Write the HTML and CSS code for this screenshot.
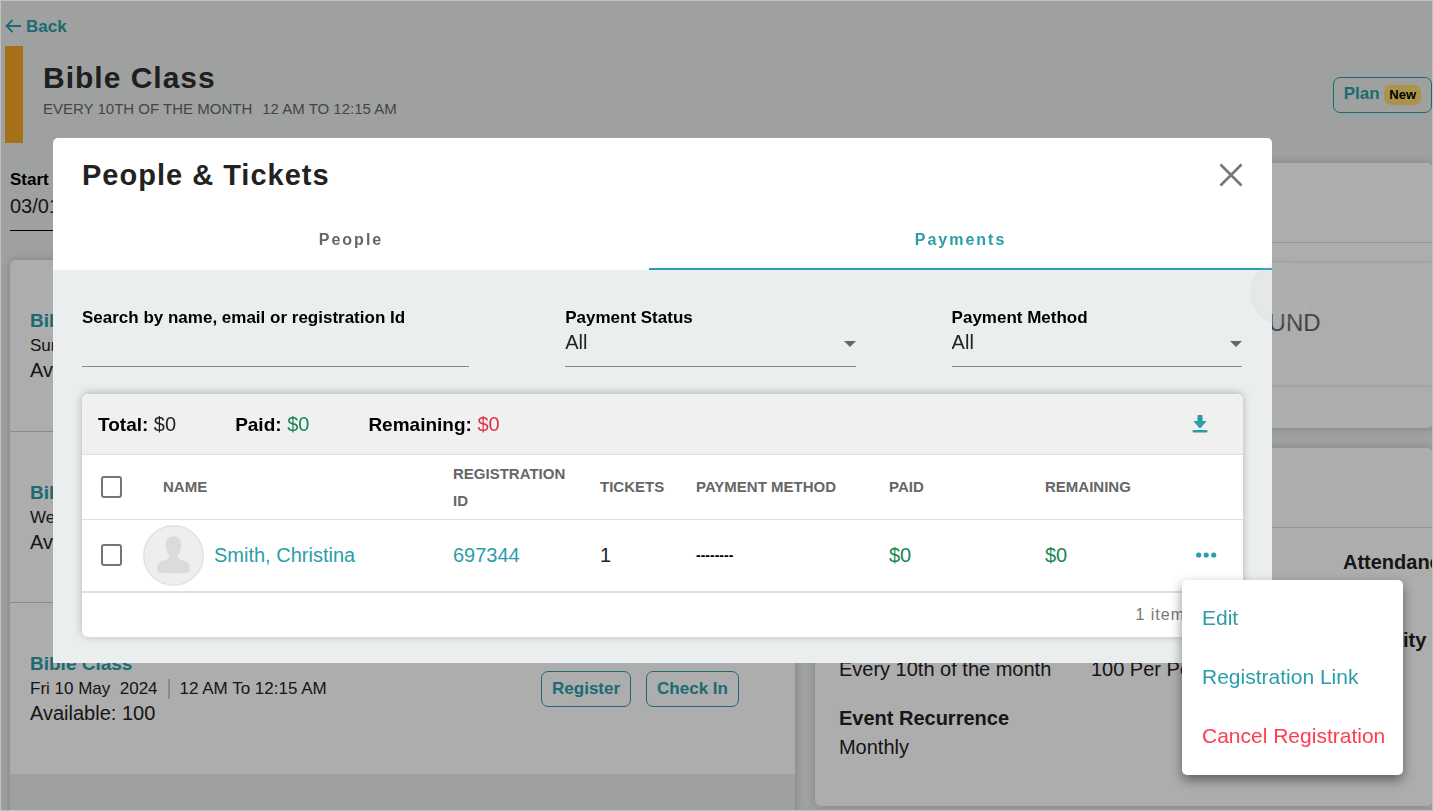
FILE: index.html
```html
<!DOCTYPE html>
<html lang="en">
<head>
    <meta charset="UTF-8">
    <meta name="viewport" content="width=device-width, initial-scale=1.0">
    <title>People &amp; Tickets</title>
    <link rel="stylesheet" href="styles.css">
</head>
<body>
    <div class="page">
        <header>
            <a href="#" class="back-link">
                <svg width="16" height="14" viewBox="0 0 16 14" fill="none" stroke="currentColor" stroke-width="1.8"><path d="M7.5 1L1.5 7l6 6M1.5 7H16"/></svg>
                Back
            </a>
            <div class="event-header">
                <div class="event-title">
                    <h1>Bible Class</h1>
                    <p><span>Every 10th of the month</span><span>12 AM to 12:15 AM</span></p>
                </div>
                <button class="outline-btn plan-btn">Plan <span class="badge">New</span></button>
            </div>
        </header>

        <div class="columns">
            <main>
                <div class="date-field">
                    <label for="start-date">Start Date</label>
                    <input type="text" id="start-date" value="03/01/2024">
                </div>
                <div class="occurrences">
                    <div class="occurrence">
                        <div>
                            <h3>Bible Class</h3>
                            <p class="when"><span>Sun 10 Mar &nbsp;2024</span></p>
                            <p>Available: 100</p>
                        </div>
                    </div>
                    <div class="occurrence">
                        <div>
                            <h3>Bible Class</h3>
                            <p class="when"><span>Wed 10 Apr &nbsp;2024</span></p>
                            <p>Available: 100</p>
                        </div>
                    </div>
                    <div class="occurrence">
                        <div>
                            <h3>Bible Class</h3>
                            <p class="when"><span>Fri 10 May &nbsp;2024</span><span>12 AM To 12:15 AM</span></p>
                            <p>Available: 100</p>
                        </div>
                        <div class="occurrence-actions">
                            <button class="outline-btn">Register</button>
                            <button class="outline-btn">Check In</button>
                        </div>
                    </div>
                </div>
            </main>

            <aside>
                <section class="card">
                    <div class="card-head"></div>
                    <div class="empty">NO RECORDS FOUND</div>
                    <div class="card-foot"></div>
                </section>
                <section class="card">
                    <div class="card-head"></div>
                    <dl class="details">
                        <div></div>
                        <div></div>
                        <div><dt>Attendance</dt></div>
                        <div><dt>Schedule</dt><dd>Every 10th of the month</dd></div>
                        <div><dt>Limit</dt><dd>100 Per Person</dd></div>
                        <div><dt>Capacity</dt></div>
                        <div><dt>Event Recurrence</dt><dd>Monthly</dd></div>
                    </dl>
                </section>
            </aside>
        </div>
    </div>

    <div class="overlay">
        <div class="modal" role="dialog" aria-labelledby="modal-title">
            <div class="modal-header">
                <h2 id="modal-title">People &amp; Tickets</h2>
                <button class="icon-btn close-btn" aria-label="Close">
                    <svg width="24" height="24" viewBox="0 0 24 24" fill="none" stroke="currentColor" stroke-width="2.6"><path d="M1.5 1.5l21 21M22.5 1.5l-21 21"/></svg>
                </button>
            </div>
            <div class="tab-buttons">
                <button class="tab-button">People</button>
                <button class="tab-button active">Payments</button>
            </div>

            <div class="modal-body">
                <div class="filters">
                    <div class="field">
                        <label for="search">Search by name, email or registration Id</label>
                        <input type="text" id="search">
                    </div>
                    <div class="field select">
                        <label for="payment-status">Payment Status</label>
                        <select id="payment-status"><option>All</option></select>
                    </div>
                    <div class="field select">
                        <label for="payment-method">Payment Method</label>
                        <select id="payment-method"><option>All</option></select>
                    </div>
                </div>

                <div class="payments">
                    <div class="summary">
                        <p><strong>Total:</strong> $0</p>
                        <p><strong>Paid:</strong> <span class="green">$0</span></p>
                        <p><strong>Remaining:</strong> <span class="red">$0</span></p>
                        <button class="icon-btn download-btn" aria-label="Download">
                            <svg width="16" height="18" viewBox="0 0 16 18" fill="currentColor"><path stroke="currentColor" stroke-linejoin="round" d="M6 .5h4v6h3.800L8 13 2.200 6.500H6z"/><rect x="0.500" y="15" width="15" height="2.600" rx="1"/></svg>
                        </button>
                    </div>
                    <table>
                        <thead>
                            <tr>
                                <th class="col-check"><input type="checkbox" aria-label="Select all"></th>
                                <th class="col-name">Name</th>
                                <th class="col-id">Registration ID</th>
                                <th class="col-tickets">Tickets</th>
                                <th class="col-method">Payment Method</th>
                                <th class="col-paid">Paid</th>
                                <th class="col-remaining">Remaining</th>
                                <th class="col-actions"></th>
                            </tr>
                        </thead>
                        <tbody>
                            <tr>
                                <td class="col-check"><input type="checkbox" aria-label="Select Smith, Christina"></td>
                                <td>
                                    <a href="#" class="person">
                                        <svg class="avatar" width="61" height="61" viewBox="0 0 61 61">
                                            <circle cx="30.500" cy="30.500" r="29.700" fill="#eee" stroke="#e2e2e2" stroke-width="1.500"/>
                                            <path fill="#dbdbdb" d="M30.500 11.200c4.800 0 7.800 3.200 7.800 8.200 0 4.600-1.500 8.200-3.500 10.600-.6 3.400 1.200 4 4.200 5 4.500 1.400 7.600 3.200 7.600 6.500v3.500c0 1.400-.7 2-2 2.400-8.500 1.500-19.500 1.500-28.200 0-1.400-.4-2-1-2-2.400v-3.500c0-3.300 3.100-5.100 7.600-6.500 3-1 4.800-1.600 4.200-5-2-2.400-3.500-6-3.500-10.600 0-5 3-8.200 7.800-8.200z"/>
                                        </svg>
                                        Smith, Christina
                                    </a>
                                </td>
                                <td><a href="#">697344</a></td>
                                <td>1</td>
                                <td class="no-method">--------</td>
                                <td class="green">$0</td>
                                <td class="green">$0</td>
                                <td>
                                    <div class="actions">
                                        <button class="icon-btn" aria-label="More actions">
                                            <svg width="22" height="6" viewBox="0 0 22 6" fill="currentColor"><circle cx="2.700" cy="3" r="2.600"/><circle cx="10.200" cy="3" r="2.600"/><circle cx="17.700" cy="3" r="2.600"/></svg>
                                        </button>
                                        <div class="menu">
                                            <button>Edit</button>
                                            <button>Registration Link</button>
                                            <button class="danger">Cancel Registration</button>
                                        </div>
                                    </div>
                                </td>
                            </tr>
                        </tbody>
                    </table>
                    <div class="table-footer">1 item</div>
                </div>
            </div>
            <span class="ripple"></span>
        </div>
    </div>
</body>
</html>
```

FILE: styles.css
```css
* {
    box-sizing: border-box;
}

body {
    font-family: "Liberation Sans", Arial, sans-serif;
    font-size: 20px;
    line-height: 25px;
    color: #222;
    background-color: #eaeeed;
    margin: 0;
    overflow: hidden;
}

h1, h2, h3, p, dl, dd {
    margin: 0;
}

a {
    color: #2a9ea8;
    text-decoration: none;
}

button, input, select {
    font-family: inherit;
    font-size: inherit;
    color: inherit;
}

button {
    cursor: pointer;
}

.page {
    min-height: 100vh;
}

.back-link {
    display: flex;
    align-items: center;
    gap: 5px;
    height: 46px;
    padding: 6px 5px 0;
    font-size: 17px;
    font-weight: bold;
}

.event-header {
    display: flex;
    align-items: center;
    justify-content: space-between;
    height: 97px;
    margin-left: 5px;
    padding-right: 1px;
    border-left: 18px solid #f5a623;
}

.event-title {
    padding-left: 20px;
}

h1 {
    font-size: 30px;
    line-height: 36px;
    letter-spacing: 1px;
    color: #2f2f2f;
}

.event-title p {
    display: flex;
    gap: 10px;
    margin-bottom: 8px;
    font-size: 15px;
    color: #666;
    text-transform: uppercase;
}

.outline-btn {
    height: 36px;
    padding: 0 10px;
    background: none;
    border: 1px solid #2a9ea8;
    border-radius: 7px;
    color: #2a9ea8;
    font-size: 17px;
    font-weight: bold;
}

.badge {
    display: inline-block;
    padding: 0 5px;
    border-radius: 7px;
    background-color: #fddb6d;
    color: #000;
    font-size: 13px;
    line-height: 20px;
}

.columns {
    display: grid;
    grid-template-columns: minmax(0, 127fr) minmax(0, 100fr);
    gap: 20px;
    margin-top: 20px;
    padding-left: 10px;
}

.date-field label {
    display: block;
    padding-top: 4px;
    font-size: 17px;
    font-weight: bold;
    color: #000;
}

.date-field input {
    width: 240px;
    height: 39px;
    padding: 0 0 10px;
    background: none;
    border: 0;
    border-bottom: 1px solid #000;
}

.occurrences {
    margin-top: 29px;
    padding-bottom: 50px;
    border-radius: 6px;
    box-shadow: 0 0 10px rgba(0, 0, 0, 0.2);
}

.occurrence {
    display: flex;
    align-items: center;
    justify-content: space-between;
    height: 171px;
    padding: 0 56px 0 20px;
    background-color: #fff;
    border-bottom: 1px solid #ccc;
}

.occurrence:first-child {
    height: 172px;
    border-radius: 6px 6px 0 0;
}

.occurrence:last-child {
    border-bottom: 0;
}

.occurrence h3 {
    font-size: 19px;
    color: #2a9ea8;
}

.when {
    display: flex;
    align-items: center;
    font-size: 17px;
}

.when span + span {
    margin-left: 10px;
    padding-left: 10px;
    border-left: 2px solid #ccc;
    line-height: 20px;
}

.occurrence-actions {
    display: flex;
    gap: 15px;
}

.card {
    margin-bottom: 20px;
    background-color: #fff;
    border-radius: 6px;
    box-shadow: 0 0 10px rgba(0, 0, 0, 0.2);
}

.card-head {
    height: 80px;
    border-bottom: 1px solid #ddd;
}

.empty {
    height: 122px;
    margin-top: 20px;
    padding-left: 251px;
    box-shadow: 0 0 5px rgba(0, 0, 0, 0.15);
    color: #666;
    font-size: 24px;
    line-height: 120px;
    white-space: nowrap;
}

.card-foot {
    height: 43px;
}

.details {
    display: grid;
    grid-template-columns: repeat(3, 252px);
    row-gap: 20px;
    padding: 20px 24px 44px;
    white-space: nowrap;
    overflow: hidden;
}

.details > div {
    height: 58px;
}

.details dt {
    font-weight: bold;
    line-height: 29px;
}

.details dd {
    line-height: 29px;
}

.overlay {
    position: fixed;
    inset: 0;
    padding: 137px 160px 0 52px;
    background-color: rgba(0, 0, 0, 0.32);
    border: 1px solid #bfc1c1;
}

.modal {
    position: relative;
    background-color: #fff;
    border-radius: 5px 5px 0 0;
}

.modal-header {
    display: flex;
    align-items: center;
    justify-content: space-between;
    height: 72px;
    padding: 2px 29px 0 29px;
}

.modal-header h2 {
    font-size: 29px;
    letter-spacing: 1px;
}

.icon-btn {
    display: flex;
    padding: 0;
    background: none;
    border: 0;
    color: #2a9ea8;
}

.close-btn {
    color: #777;
}

.tab-buttons {
    display: flex;
}

.tab-button {
    flex: 596;
    height: 60px;
    padding: 2px 0 0;
    background: none;
    border: 0;
    border-bottom: 2px solid transparent;
    color: #666;
    font-size: 16px;
    font-weight: bold;
    letter-spacing: 2px;
}

.tab-button.active {
    flex: 623;
    border-bottom-color: #2a9ea8;
    color: #2a9ea8;
}

.modal-body {
    padding: 35px 29px 26px;
    background-color: #eaeeef;
}

.filters {
    display: grid;
    grid-template-columns: 4fr 3fr 3fr;
    gap: 96px;
    padding-right: 1px;
}

.field label {
    display: block;
    font-size: 17px;
    font-weight: bold;
    color: #000;
}

.field input,
.field select {
    display: block;
    width: 100%;
    height: 37px;
    padding: 0 0 12px;
    background: none;
    border: 0;
    border-bottom: 1px solid #858989;
    border-radius: 0;
    appearance: none;
}

.select {
    position: relative;
}

.select::after {
    content: "";
    position: absolute;
    right: 0;
    bottom: 20px;
    border: 6px solid transparent;
    border-top-color: #666;
    border-bottom: 0;
    pointer-events: none;
}

.payments {
    margin-top: 27px;
    background-color: #fff;
    border-radius: 6px;
    box-shadow: 0 -1px 8px rgba(0, 0, 0, 0.25);
}

.summary {
    display: flex;
    align-items: center;
    gap: 59px;
    height: 61px;
    padding: 0 35px 0 16px;
    background-color: #f0f0f0;
    border-bottom: 1px solid #dcdfe4;
    border-radius: 6px 6px 0 0;
}

.summary strong {
    font-size: 19px;
    color: #000;
}

.download-btn {
    margin-left: auto;
}

.green {
    color: #198754;
}

.red {
    color: #dc3545;
}

table {
    width: 100%;
    border-collapse: collapse;
    table-layout: fixed;
}

th, td {
    padding: 0;
    text-align: left;
}

th {
    height: 64px;
    border-bottom: 1px solid #dddfe0;
    color: #666;
    font-size: 15px;
    line-height: 27px;
    text-transform: uppercase;
}

td {
    height: 73px;
    border-bottom: 2px solid #dddfe0;
}

.col-check { width: 61px; padding-left: 19px; }
.col-name { width: 310px; padding-left: 20px; }
.col-id { width: 147px; padding-right: 30px; }
.col-tickets { width: 96px; }
.col-method { width: 193px; }
.col-paid { width: 156px; }
.col-remaining { width: 151px; }
.col-actions { width: 47px; }

input[type="checkbox"] {
    display: block;
    width: 21px;
    height: 22px;
    margin: 0;
    background-color: #fff;
    border: 2px solid #757575;
    border-radius: 3px;
    appearance: none;
}

.person {
    display: flex;
    align-items: center;
    gap: 10px;
}

.no-method {
    font-size: 14px;
    font-weight: bold;
    color: #000;
}

.actions {
    position: relative;
}

.menu {
    position: absolute;
    top: 28px;
    left: -14px;
    z-index: 1;
    display: flex;
    flex-direction: column;
    width: 221px;
    padding: 8px 0 10px;
    background-color: #fff;
    border-radius: 5px;
    box-shadow: 0 5px 12px rgba(0, 0, 0, 0.45);
}

.menu button {
    height: 59px;
    padding: 0 20px;
    background: none;
    border: 0;
    color: #2a9ea8;
    font-size: 21px;
    text-align: left;
    white-space: nowrap;
}

.menu .danger {
    color: #ff3b4e;
}

.table-footer {
    height: 44px;
    padding-right: 58px;
    color: #777;
    font-size: 16px;
    letter-spacing: 1px;
    line-height: 44px;
    text-align: right;
}

.ripple {
    position: absolute;
    top: 124px;
    right: -40px;
    width: 62px;
    height: 62px;
    border-radius: 50%;
    background: radial-gradient(rgba(190, 190, 190, 0.05), rgba(190, 190, 190, 0.18));
    pointer-events: none;
}
```
